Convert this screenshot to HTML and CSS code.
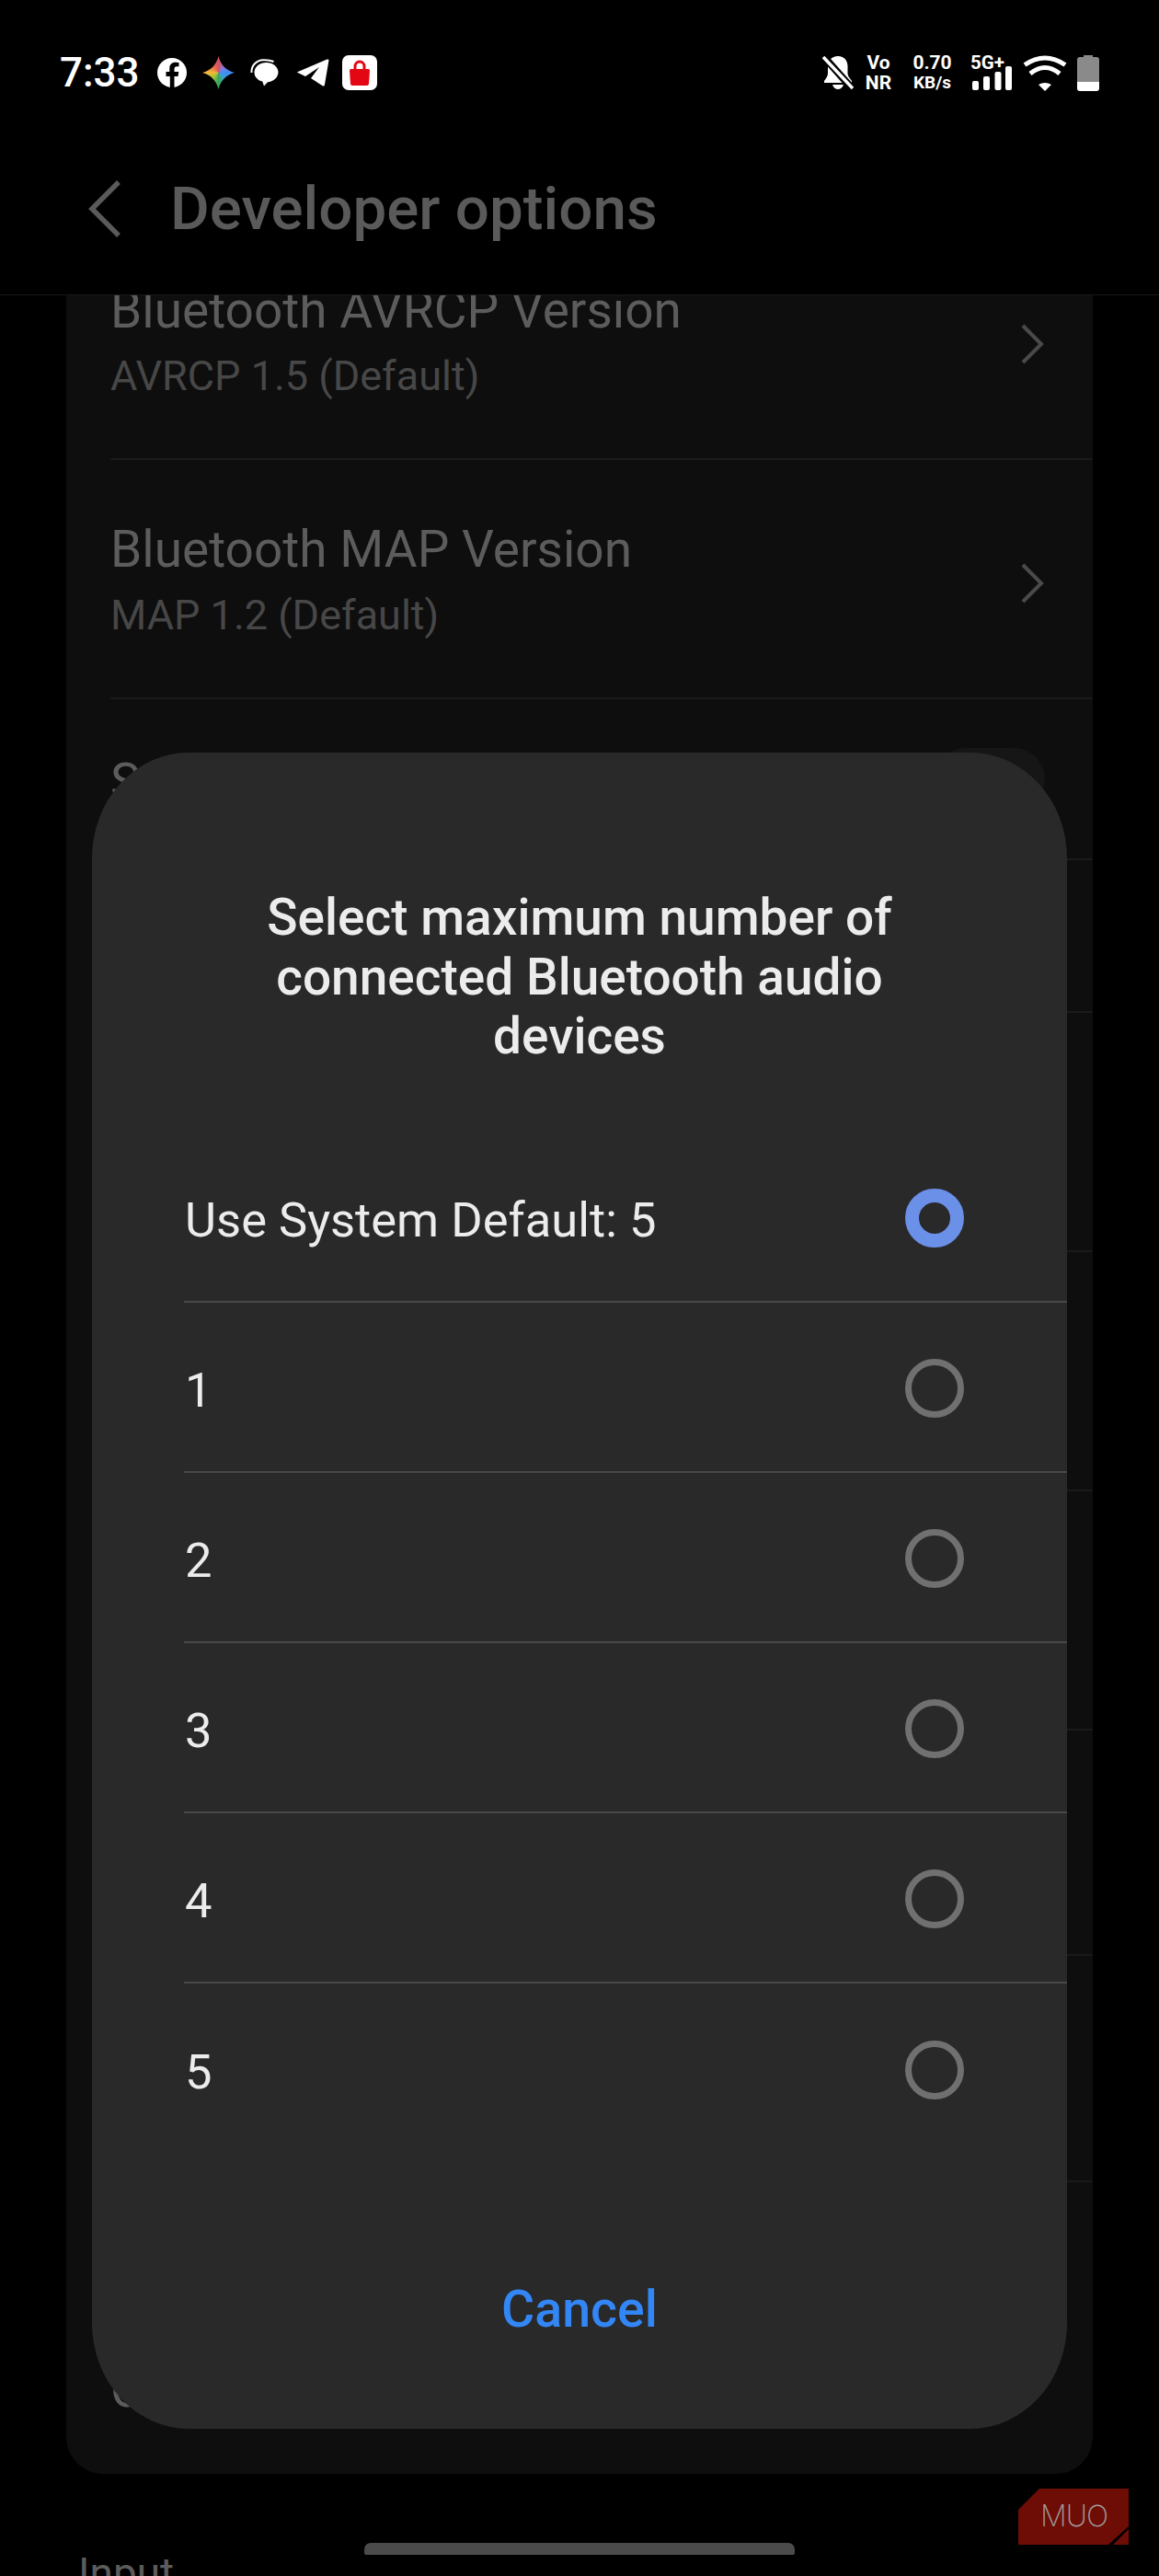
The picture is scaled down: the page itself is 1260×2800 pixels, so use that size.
FILE: index.html
```html
<!DOCTYPE html>
<html lang="en">
<head>
<meta charset="utf-8">
<title>Developer options</title>
<link rel="stylesheet" href="styles.css">
</head>
<body>
<div class="page">
  <header class="top">
    <div class="status">
      <span class="time">7:33</span>
      <svg class="ic-fb" width="32" height="32" viewBox="0 0 32 32"><circle cx="16" cy="16" r="16" fill="#fff"/><path fill="#000" d="M18.5 32V20h4l.8-5h-4.8v-3c0-1.5.7-2.8 2.8-2.8h2.2V5s-2-.3-3.8-.3c-4 0-6.4 2.4-6.4 6.6V15H9.5v5h4.3v12z"/></svg>
      <span class="star"></span>
      <svg width="31" height="30" viewBox="0 0 31 30"><path fill="#fff" d="M17.5 4C24.7 4 30.500 8.700 30.500 14.500S24.700 25 19 25.200L15 29.500 13.300 24.600C7.800 23.300 4.500 19.300 4.500 14.500 4.500 8.700 10.300 4 17.500 4z"/><path fill="none" stroke="#fff" stroke-width="2" d="M1.500 15C1 7 7 1.500 14 1.200 18 1 22 1.400 25.500 3"/></svg>
      <svg class="ic-tg" width="36" height="30" viewBox="0 0 36 30"><path fill="#fff" d="M.8 14.600 33.500.6Q35.800-.2 35.400 2L31 28Q30.500 30.500 28.200 29L16 21 25 9 10 19z"/></svg>
      <svg class="ic-bag" width="38" height="38" viewBox="0 0 38 38"><rect width="38" height="38" rx="7" fill="#fff"/><path fill="none" stroke="#e30613" stroke-width="3" d="M14 16v-4a5 5 0 0 1 10 0v4"/><path fill="#e30613" d="M9.500 15h19q1.500 0 1.500 1.500l-1 14.500q-.2 2-2 2H11q-1.800 0-2-2L8 16.500Q8 15 9.500 15z"/></svg>
      <div class="status-right">
        <svg width="35" height="38" viewBox="0 0 35 38"><path fill="#fff" d="M18 1c7 0 10.500 5 10.500 11v8c0 3 2.500 5 4.500 8v2H3v-2c2-3 4-5 4-8v-8C7 6 11 1 18 1zM12 32h12c-1 3.500-3.500 5-6 5s-5-1.500-6-5z"/><path stroke="#000" stroke-width="8" d="M2 1 35 38"/><path stroke="#fff" stroke-width="3.500" d="M2 2 34 36"/></svg>
        <div class="stack vo"><span>Vo</span><span>NR</span></div>
        <div class="stack speed"><span class="speed-num">0.70</span><span>KB/s</span></div>
        <div class="net">
          <span class="net-label">5G+</span>
          <svg class="bars" width="44" height="26" viewBox="0 0 44 26"><rect x="0" y="16" width="7" height="10" rx="2" fill="#fff"/><rect x="12" y="11" width="7" height="15" rx="2" fill="#fff"/><rect x="24.500" y="6" width="7" height="20" rx="2" fill="#fff"/><rect x="36" y="0" width="7" height="26" rx="2" fill="#fff"/></svg>
        </div>
        <svg class="ic-wifi" width="48" height="39" viewBox="0 0 48 39"><path fill="none" stroke="#fff" stroke-width="5" d="M2 10.500Q24-4.500 46 10.500M8 20Q24 7 40 20"/><path fill="#fff" d="M17 32Q24 28 31 32L24 39z"/></svg>
        <svg class="ic-batt" width="24" height="39" viewBox="0 0 24 39"><path fill="#8a8a8a" d="M7 0h10v2h4q3 0 3 3v25H0V5q0-3 3-3h4z"/><path fill="#fff" d="M0 29h24v7q0 3-3 3H3q-3 0-3-3z"/></svg>
      </div>
    </div>
    <div class="appbar">
      <svg class="back" width="36" height="62" viewBox="0 0 36 62"><path fill="none" stroke="#5a5a5a" stroke-width="5.500" d="M33 2 4 31l29 29"/></svg>
      <h1 class="app-title">Developer options</h1>
    </div>
  </header>

  <main class="card">
    <div class="row h260">
      <div class="row-text">
        <div class="row-title">Bluetooth AVRCP Version</div>
        <div class="row-sub">AVRCP 1.5 (Default)</div>
      </div>
      <svg class="chev" width="26" height="44" viewBox="0 0 26 44"><path fill="none" stroke="#4a4a4a" stroke-width="4" d="M3 2l20 20L3 42"/></svg>
    </div>
    <div class="row h260">
      <div class="row-text">
        <div class="row-title">Bluetooth MAP Version</div>
        <div class="row-sub">MAP 1.2 (Default)</div>
      </div>
      <svg class="chev" width="26" height="44" viewBox="0 0 26 44"><path fill="none" stroke="#4a4a4a" stroke-width="4" d="M3 2l20 20L3 42"/></svg>
    </div>
    <div class="row h175">
      <div class="row-text"><div class="row-title">S</div></div>
      <span class="toggle"></span>
    </div>
    <div class="row h166"></div>
    <div class="row h260"></div>
    <div class="row h260"></div>
    <div class="row h260"></div>
    <div class="row h245"></div>
    <div class="row h246"></div>
    <div class="row h317 last">
      <div class="row-title tail">C</div>
    </div>
  </main>

  <div class="section-label">Input</div>

  <section class="dialog">
    <h2 class="dialog-title">Select maximum number of connected Bluetooth audio devices</h2>
    <ul class="options">
      <li class="option"><span>Use System Default: 5</span><span class="radio on"></span></li>
      <li class="option"><span>1</span><span class="radio"></span></li>
      <li class="option"><span>2</span><span class="radio"></span></li>
      <li class="option"><span>3</span><span class="radio"></span></li>
      <li class="option"><span>4</span><span class="radio"></span></li>
      <li class="option"><span>5</span><span class="radio"></span></li>
    </ul>
    <div class="cancel">Cancel</div>
  </section>

  <div class="muo">
    <svg width="120" height="61" viewBox="0 0 120 61"><path fill="#6e0d05" d="M0 23 23 0h97v41L98 61H0zM103 61l17-17v17z"/></svg>
    <span class="muo-text">MUO</span>
  </div>
  <div class="home"></div>
</div>
</body>
</html>
```

FILE: styles.css
```css
* { box-sizing: border-box; }
html, body { margin: 0; padding: 0; background: #000; }
.page {
  position: relative;
  width: 1260px;
  height: 2800px;
  overflow: hidden;
  background: #000;
  font-family: Roboto, "Noto Sans", sans-serif;
}

/* header */
.top {
  position: relative;
  z-index: 1;
  height: 321px;
  background: #000;
  border-bottom: 1px solid #171717;
}
.status {
  display: flex;
  align-items: center;
  gap: 17px;
  height: 118px;
  padding: 40px 65px 0;
}
.time {
  width: 85px;
  margin-right: 4px;
  color: #fff;
  font-size: 44px;
  font-weight: 500;
  line-height: 1;
  white-space: nowrap;
}
.star {
  width: 35px;
  height: 36px;
  background: conic-gradient(#d9505f 0deg, #7d7fe0 45deg, #3f8cf5 90deg, #3f9fd0 135deg, #36a85a 180deg, #9fc43a 225deg, #f4b83a 270deg, #e8754a 315deg, #d9505f 360deg);
  clip-path: path("M17.500 0C19.500 9 26 16 35 18C26 20 19.500 27 17.500 36C15.500 27 9 20 0 18C9 16 15.500 9 17.500 0Z");
}
.ic-tg { margin-left: 2px; }
.ic-bag { margin-left: -3px; }
.status-right {
  display: flex;
  align-items: center;
  margin-left: auto;
  color: #fff;
  font-weight: 700;
}
.stack {
  display: flex;
  flex-direction: column;
  align-items: center;
  font-size: 19px;
  line-height: 22px;
}
.vo { margin-left: 13px; width: 28px; font-size: 21px; }
.speed { margin-left: 22px; width: 45px; }
.speed-num { font-size: 21px; }
.net {
  position: relative;
  width: 45px;
  height: 38px;
  margin-left: 19px;
}
.net-label {
  display: block;
  font-size: 20.500px;
  line-height: 16px;
  white-space: nowrap;
}
.bars { position: absolute; left: 2px; top: 12px; }
.ic-wifi { margin-left: 12px; }
.ic-batt { margin-left: 11px; }

.appbar {
  display: flex;
  align-items: center;
  height: 100px;
  margin-top: 59px;
  padding-left: 96px;
}
.app-title {
  margin: 0 0 0 53px;
  color: #5a5a5a;
  font-size: 65.500px;
  font-weight: 500;
  line-height: 1;
  white-space: nowrap;
}

/* background list */
.card {
  margin: -81px 72px 0;
  background: #0e0e0e;
  border-radius: 0 0 40px 40px;
}
.row {
  display: flex;
  align-items: center;
  justify-content: space-between;
  margin-left: 48px;
  padding-right: 52px;
  border-bottom: 2px solid #1a1a1a;
}
.last { border-bottom: 0; align-items: flex-start; }
.h260 { height: 260px; }
.h175 { height: 175px; }
.h166 { height: 166px; }
.h245 { height: 245px; }
.h246 { height: 246px; }
.h317 { height: 317px; }
.row-text { margin-top: 6px; }
.row-title {
  color: #5c5c5c;
  font-size: 55px;
  line-height: 74px;
  white-space: nowrap;
}
.row-sub {
  color: #474747;
  font-size: 45px;
  line-height: 70px;
  white-space: nowrap;
}
.chev { margin: 10px 1px 0 0; }
.tail { margin-top: 188px; }
.toggle {
  width: 120px;
  height: 68px;
  border-radius: 34px;
  background: #161616;
}
.section-label {
  margin: 78px 0 0 85px;
  color: #5c5c5c;
  font-size: 46px;
  line-height: 60px;
}

/* dialog */
.dialog {
  position: absolute;
  z-index: 2;
  left: 100px;
  top: 818px;
  width: 1060px;
  height: 1822px;
  padding-top: 147px;
  background: #292929;
  border-radius: 105px / 115px;
}
.dialog-title {
  margin: 0 auto;
  width: 720px;
  color: #ececec;
  font-size: 55px;
  font-weight: 500;
  line-height: 64.500px;
  text-align: center;
}
.options {
  list-style: none;
  margin: 72px 0 0 100px;
  padding: 0;
}
.option {
  display: flex;
  align-items: center;
  justify-content: space-between;
  height: 185px;
  padding: 7px 112px 0 1px;
  color: #ececec;
  font-size: 52.500px;
  border-bottom: 2px solid #484848;
}
.option:last-child { border-bottom: 0; }
.radio {
  width: 64px;
  height: 64px;
  border: 7px solid #707070;
  border-radius: 50%;
  margin-bottom: 4px;
}
.radio.on { border: 15px solid #6b90e8; }
.cancel {
  margin-top: 140px;
  color: #3386f5;
  font-size: 55.500px;
  font-weight: 500;
  line-height: 60px;
  text-align: center;
}

/* overlays */
.muo {
  position: absolute;
  left: 1107px;
  top: 2705px;
  width: 120px;
  height: 61px;
  z-index: 3;
}
.muo svg { display: block; }
.muo-text {
  position: absolute;
  left: 24px;
  top: 14px;
  color: #a09a9a;
  font-family: Inter, sans-serif;
  font-size: 32px;
  font-weight: 200;
  line-height: 32px;
  letter-spacing: -1px;
}
.home {
  position: absolute;
  z-index: 3;
  left: 396px;
  top: 2764px;
  width: 468px;
  height: 13px;
  background: #4b4b4b;
  border-radius: 7px 7px 2px 2px;
}
```
